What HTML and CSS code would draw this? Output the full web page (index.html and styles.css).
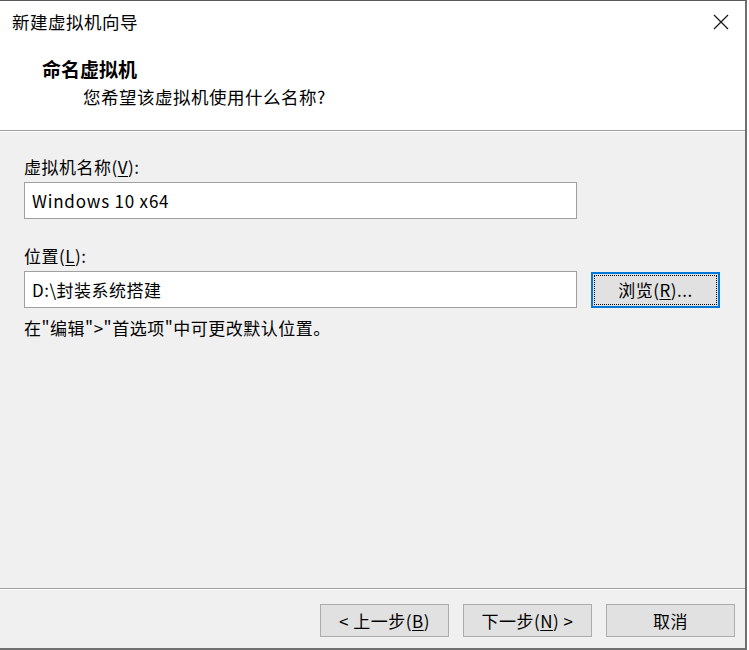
FILE: index.html
```html
<!DOCTYPE html>
<html lang="zh-CN">
<head>
<meta charset="utf-8">
<title>新建虚拟机向导</title>
<link rel="stylesheet" href="styles.css">
</head>
<body>
<div class="window">
  <div class="top">
    <div class="titlebar">
      <span class="title">新建虚拟机向导</span>
      <svg class="close" width="16" height="16" viewBox="0 0 16 16"><path d="M1 1 L15 15 M15 1 L1 15" stroke="#1a1a1a" stroke-width="1.3" fill="none"/></svg>
    </div>
    <div class="header">
      <div class="h-title">命名虚拟机</div>
      <div class="h-sub">您希望该虚拟机使用什么名称?</div>
    </div>
  </div>
  <div class="content">
    <div class="label">虚拟机名称(<u>V</u>):</div>
    <div class="row">
      <div class="input latin">Windows 10 x64</div>
    </div>
    <div class="label label2">位置(<u>L</u>):</div>
    <div class="row">
      <div class="input">D:\封装系统搭建</div>
      <div class="btn focus"><span class="inner">浏览(<u>R</u>)...</span></div>
    </div>
    <div class="note">在"编辑"&gt;"首选项"中可更改默认位置。</div>
  </div>
  <div class="footer">
    <div class="btn">&lt; 上一步(<u>B</u>)</div>
    <div class="btn">下一步(<u>N</u>) &gt;</div>
    <div class="btn">取消</div>
  </div>
</div>
</body>
</html>
```
FILE: styles.css
```css
html, body {
  margin: 0;
  padding: 0;
  background: #ffffff;
}
body {
  font-family: "Noto Sans CJK SC", "Noto Sans", sans-serif;
  font-size: 17px;
  letter-spacing: 0.5px;
  color: #000;
}
.window {
  box-sizing: border-box;
  width: 747px;
  height: 650px;
  border-top: 1px solid #5a5a5a;
  border-right: 2px solid #707070;
  border-bottom: 2px solid #707070;
  background: #f0f0f0;
  display: flex;
  flex-direction: column;
}
.top {
  background: #fff;
  height: 129px;
  border-bottom: 1px solid #a0a0a0;
  display: flex;
  flex-direction: column;
}
.titlebar {
  height: 44px;
  display: flex;
  align-items: center;
  justify-content: space-between;
  padding: 0 16px 0 12px;
}
.title {
  font-size: 17.5px;
  line-height: 22px;
  margin-top: -2px;
}
.close {
  width: 16px;
  height: 16px;
  margin-top: -2px;
}
.header {
  padding-left: 42px;
}
.h-title {
  font-weight: bold;
  font-size: 19px;
  letter-spacing: 0;
  line-height: 24px;
  margin-top: 12px;
}
.h-sub {
  padding-left: 41px;
  font-size: 17.5px;
  line-height: 22px;
  margin-top: 5px;
}
.content {
  flex: 1;
  padding: 24px 0 0 24px;
  border-top: 1px solid #fff;
}
.label {
  line-height: 22px;
  height: 22px;
}
.label2 {
  margin-top: 26px;
}
.row {
  display: flex;
  align-items: center;
  gap: 14px;
  margin-top: 4px;
}
.input {
  box-sizing: border-box;
  width: 553px;
  height: 37px;
  background: #fff;
  border: 1px solid #a0a0a0;
  display: flex;
  align-items: center;
  padding-left: 7px;
  line-height: 22px;
}
.input.latin {
  letter-spacing: 0.8px;
}
.btn {
  box-sizing: border-box;
  width: 129px;
  height: 33px;
  background: #e1e1e1;
  border: 1px solid #adadad;
  display: flex;
  align-items: center;
  justify-content: center;
  line-height: 22px;
}
.btn.focus {
  height: 36px;
  border: 2px solid #0078d7;
  padding: 1px;
}
.btn.focus .inner {
  box-sizing: border-box;
  width: 100%;
  height: 100%;
  border: 1px dotted #000;
  display: flex;
  align-items: center;
  justify-content: center;
}
.note {
  margin-top: 9px;
  line-height: 22px;
}
.footer {
  height: 60px;
  border-top: 1px solid #a0a0a0;
  box-shadow: inset 0 1px 0 #fff;
  display: flex;
  justify-content: flex-end;
  align-items: flex-start;
  gap: 14px;
  padding: 15px 10px 0 0;
  box-sizing: border-box;
}
.footer .btn {
  height: 33px;
}
u {
  text-decoration: underline;
  text-underline-offset: 2px;
}
```
